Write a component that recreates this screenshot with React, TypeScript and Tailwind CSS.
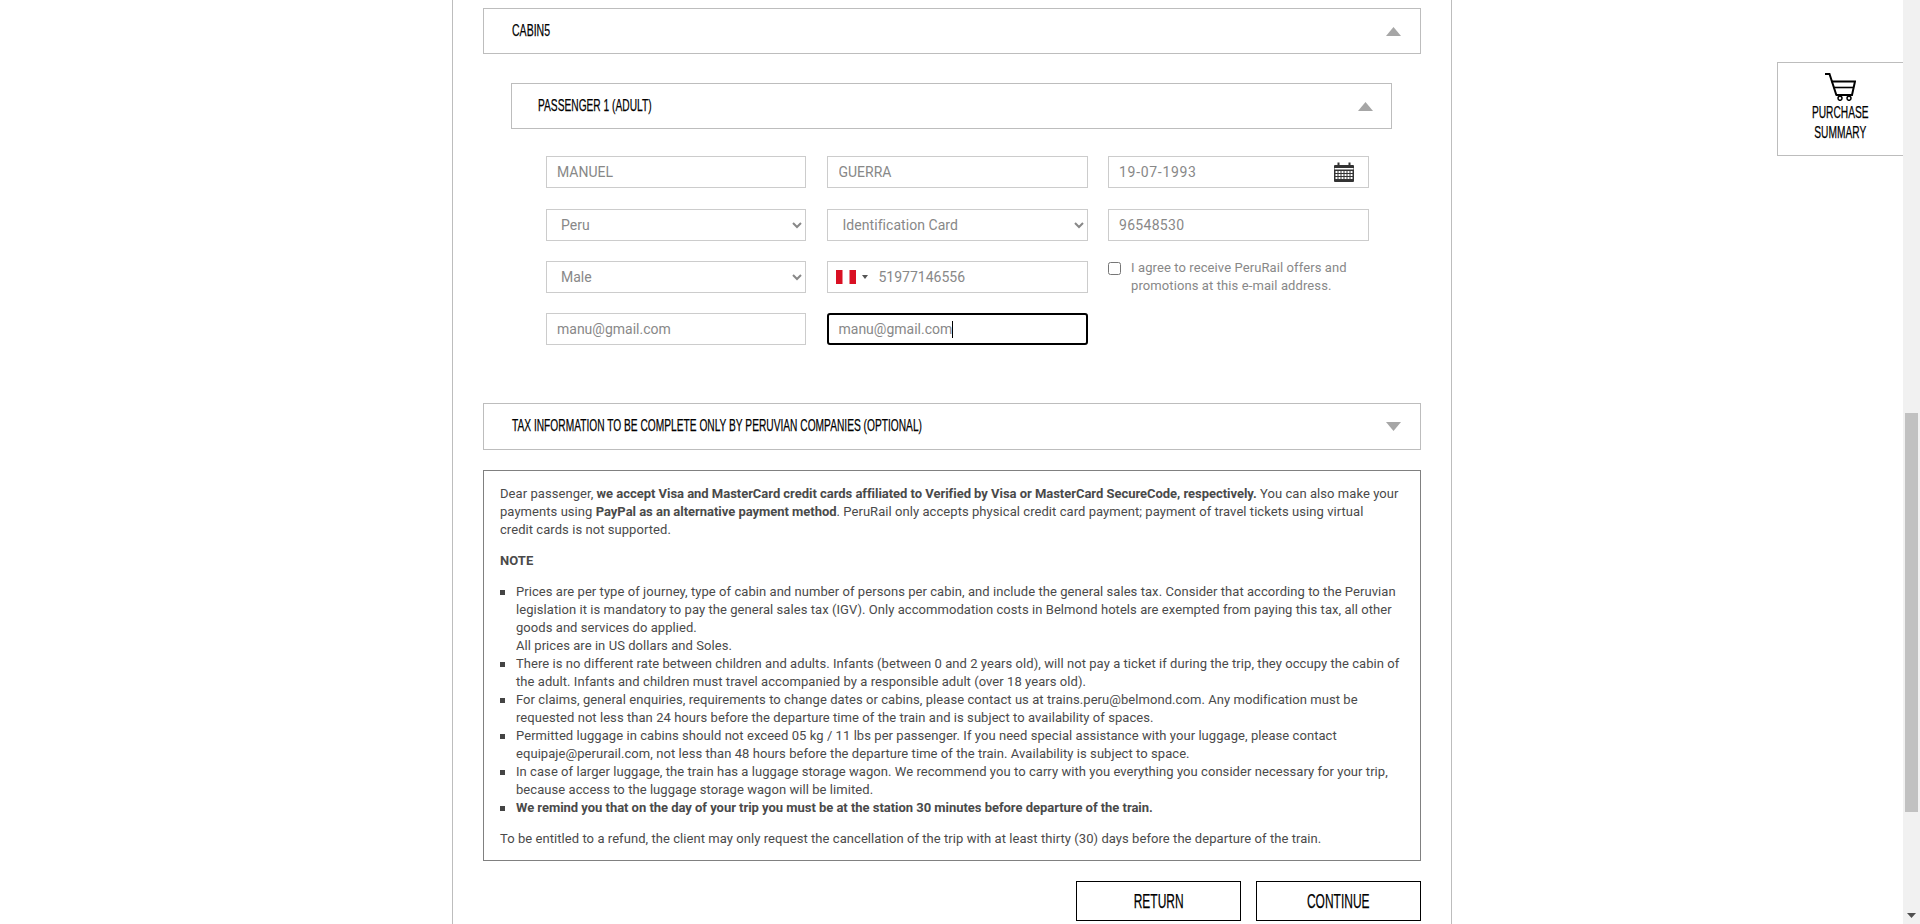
import React from "react"

const oswald = "font-['Liberation_Sans',sans-serif] uppercase whitespace-nowrap text-black [-webkit-text-stroke:0.25px_black]"

// no condensed font here, so the headings are squeezed sideways
const Title = ({ text, squeeze }: { text: string; squeeze: string }) => (
  <span className={`${oswald} ${squeeze} inline-block origin-left -translate-y-px text-[17px] leading-none`}>{text}</span>
)

const Arrow = ({ down }: { down?: boolean }) => (
  <svg width="15" height="9" viewBox="0 0 15 9" className="shrink-0">
    <polygon points={down ? "0,0 15,0 7.5,9" : "0,9 15,9 7.5,0"} fill="#a6a6a6" />
  </svg>
)

const Section = ({ title, down, squeeze, className }: { title: string; down?: boolean; squeeze: string; className: string }) => (
  <div className={`flex items-center justify-between border border-[#bdbdbd] ${className}`}>
    <Title text={title} squeeze={squeeze} />
    <Arrow down={down} />
  </div>
)

const fieldCls = "h-8 w-full border border-[#ccc] bg-white text-[14px] text-[#888] outline-none"

const Input = ({ value, className = "px-2.5" }: { value: string; className?: string }) => (
  <input readOnly value={value} className={`${fieldCls} ${className}`} />
)

const Select = ({ value, className = "px-2.5" }: { value: string; className?: string }) => (
  <select defaultValue={value} className={`${fieldCls} ${className}`}>
    <option>{value}</option>
  </select>
)

const CalendarIcon = () => (
  <svg width="20" height="20" viewBox="0 0 20 20" className="shrink-0">
    <path d="M1 3h18a1 1 0 0 1 1 1v15a1 1 0 0 1-1 1H1a1 1 0 0 1-1-1V4a1 1 0 0 1 1-1z" fill="#333" />
    <rect x="3.5" y="0.5" width="2" height="4" fill="#333" />
    <rect x="14.5" y="0.5" width="2" height="4" fill="#333" />
    <rect x="0.5" y="6" width="19" height="1.5" fill="#fff" />
    <g fill="#fff">
      {[9, 12, 15].map((y) =>
        [1.5, 4.5, 7.5, 10.5, 13.5, 16.5].map((x) => <rect key={`${x}-${y}`} x={x} y={y} width="2" height="2" />)
      )}
    </g>
  </svg>
)

const CartIcon = () => (
  <svg width="31" height="28" viewBox="0 0 31 28" fill="none" stroke="#000">
    <path d="M0 1h4.5l7 21.5" strokeWidth="2" />
    <path d="M6.5 8.5h23.5l-3 13.5h-16" strokeWidth="2" />
    <path d="M8.5 14.5h20" strokeWidth="1.6" />
    <circle cx="15" cy="25.3" r="2" strokeWidth="1.5" />
    <circle cx="24" cy="25.3" r="2" strokeWidth="1.5" />
  </svg>
)

const Strong = ({ children }: { children: React.ReactNode }) => <b className="font-bold tracking-[-0.03px]">{children}</b>

const bullets = [
  <>
    Prices are per type of journey, type of cabin and number of persons per cabin, and include the general sales tax. Consider that according to the Peruvian legislation it is mandatory to pay the general sales tax (IGV). Only accommodation costs in Belmond hotels are exempted from paying this tax, all other goods and services do applied.
    <br />
    All prices are in US dollars and Soles.
  </>,
  <>There is no different rate between children and adults. Infants (between 0 and 2 years old), will not pay a ticket if during the trip, they occupy the cabin of the adult. Infants and children must travel accompanied by a responsible adult (over 18 years old).</>,
  <>For claims, general enquiries, requirements to change dates or cabins, please contact us at trains.peru@belmond.com. Any modification must be requested not less than 24 hours before the departure time of the train and is subject to availability of spaces.</>,
  <>Permitted luggage in cabins should not exceed 05 kg / 11 lbs per passenger. If you need special assistance with your luggage, please contact equipaje@perurail.com, not less than 48 hours before the departure time of the train. Availability is subject to space.</>,
  <>In case of larger luggage, the train has a luggage storage wagon. We recommend you to carry with you everything you consider necessary for your trip, because access to the luggage storage wagon will be limited.</>,
  <Strong>We remind you that on the day of your trip you must be at the station 30 minutes before departure of the train.</Strong>,
]

const Button = ({ text }: { text: string }) => (
  <button className="flex h-10 w-[165px] items-center justify-center border border-black bg-white">
    <span className={`${oswald} scale-x-[.6] text-[20px] leading-none`}>{text}</span>
  </button>
)

export default function App() {
  return (
    <div className="relative flex h-[924px] w-[1920px] overflow-hidden bg-white font-['Roboto',sans-serif]">
      <div className="min-w-0 flex-1">
        <div className="ml-[452px] h-full w-[1000px] border-x border-[#bdbdbd] pl-[30px] pt-[8px]">
          <div className="w-[938px]">
            <Section title="Cabin5" squeeze="scale-x-[.62]" className="h-[46px] pl-[28px] pr-[19px]" />

            <Section title="Passenger 1 (Adult)" squeeze="scale-x-[.6]" className="ml-[28px] mt-[29px] h-[46px] w-[881px] pl-[26px] pr-[18px]" />

            {/* Passenger form */}
            <div className="ml-[63px] mt-[27px] grid w-[823px] grid-cols-[260px_261px_261px] grid-rows-[32.5px_32.5px_32.2px_32px] gap-x-[20.5px] gap-y-[20px]">
              <Input value="MANUEL" />
              <Input value="GUERRA" className="pl-[11px] pr-2.5" />
              <div className="relative">
                <Input value="19-07-1993" className="px-2.5 tracking-[.7px]" />
                <div className="absolute right-[15px] top-[6px]">
                  <CalendarIcon />
                </div>
              </div>

              <Select value="Peru" />
              <Select value="Identification Card" className="pl-[11px] pr-2.5 tracking-[.05px]" />
              <Input value="96548530" className="px-2.5 tracking-[.3px]" />

              <Select value="Male" />
              <div className="flex h-8 items-center border border-[#ccc] pl-[8px] text-[14px] text-[#888]">
                <svg width="20" height="14" viewBox="0 0 20 14" className="shrink-0">
                  <rect width="20" height="14" fill="#fff" />
                  <rect width="6.5" height="14" fill="#d91023" />
                  <rect x="13.5" width="6.5" height="14" fill="#d91023" />
                </svg>
                <svg width="6" height="4" viewBox="0 0 6 4" className="ml-[6px] shrink-0">
                  <polygon points="0,0 6,0 3,4" fill="#555" />
                </svg>
                <span className="ml-[11px]">51977146556</span>
              </div>
              <label className="flex h-8 items-start text-[13px] leading-[18px] tracking-[.1px] text-[#888]">
                <input type="checkbox" className="mt-[1px] h-[13px] w-[13px] shrink-0" />
                <span className="ml-[10px] w-[230px] -translate-y-[2px]">I agree to receive PeruRail offers and promotions at this e-mail address.</span>
              </label>

              <Input value="manu@gmail.com" />
              <div className="flex h-8 items-center rounded-[3px] border-2 border-black pl-[10px] text-[14px] text-[#888]">
                manu@gmail.com
                <span className="h-[17px] w-px bg-black" />
              </div>
            </div>

            <Section
              title="Tax information to be complete only by peruvian companies (optional)"
              squeeze="scale-x-[.6]"
              down
              className="mt-[58px] h-[47px] pl-[28px] pr-[19px]"
            />

            {/* Payment notes */}
            <div className="mt-[20px] h-[391px] border border-[#808080] pl-4 pr-4 pt-[14px] text-[13px] leading-[18px] tracking-[.06px] text-[#4a4a4a]">
              <p>
                Dear passenger, <Strong>we accept Visa and MasterCard credit cards affiliated to Verified by Visa or MasterCard SecureCode, respectively.</Strong> You can also make your payments using <Strong>PayPal as an alternative payment method</Strong>. PeruRail only accepts physical credit card payment; payment of travel tickets using virtual
                <br />
                credit cards is not supported.
              </p>
              <p className="mt-[13px] font-bold">NOTE</p>
              <ul className="mt-[13px] pl-4">
                {bullets.map((b, i) => (
                  <li key={i} className="relative before:absolute before:-left-4 before:top-[7px] before:h-[5px] before:w-[5px] before:bg-[#444]">{b}</li>
                ))}
              </ul>
              <p className="mt-[13px]">To be entitled to a refund, the client may only request the cancellation of the trip with at least thirty (30) days before the departure of the train.</p>
            </div>

            <div className="mt-[20px] flex justify-end gap-[15px]">
              <Button text="Return" />
              <Button text="Continue" />
            </div>
          </div>
        </div>
      </div>

      {/* Scrollbar */}
      <div className="flex w-[17px] shrink-0 flex-col bg-[#f1f1f1]">
        <div className="ml-[2px] mt-[413px] h-[399px] w-[13px] bg-[#c1c1c1]" />
        <svg width="9" height="5" viewBox="0 0 9 5" className="ml-[4px] mt-[101px]">
          <polygon points="0,0 9,0 4.5,5" fill="#505050" />
        </svg>
      </div>

      {/* Purchase summary tab */}
      <div className="absolute right-[17px] top-[62px] flex h-[94px] w-[126px] flex-col items-center border border-r-0 border-[#bdbdbd] bg-white pt-[10px]">
        <CartIcon />
        <span className={`${oswald} mt-[2px] scale-x-[.6] text-[17px] leading-[20px]`}>Purchase</span>
        <span className={`${oswald} scale-x-[.6] text-[17px] leading-[20px]`}>Summary</span>
      </div>
    </div>
  )
}
